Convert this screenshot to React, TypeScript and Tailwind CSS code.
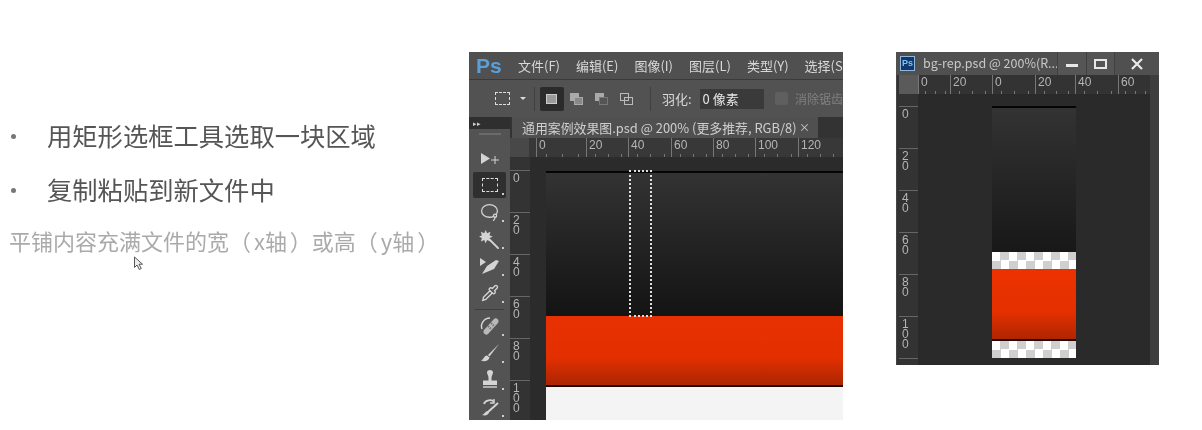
import { Lasso, Pipette } from "lucide-react";

const sans = "font-['Noto_Sans_CJK_SC',sans-serif]";
const latin = "font-['Liberation_Sans',sans-serif]";

const menus = ["文件(F)", "编辑(E)", "图像(I)", "图层(L)", "类型(Y)", "选择(S"];

const mainRuler = [
  { label: "0", width: "w-[50px]" },
  { label: "20", width: "w-[42px]" },
  { label: "40", width: "w-[43px]" },
  { label: "60", width: "w-[42px]" },
  { label: "80", width: "w-[42px]" },
  { label: "100", width: "w-[43px]" },
  { label: "120", width: "w-[42px]" },
];

const docRuler = [
  { label: "0", width: "w-[32px]" },
  { label: "20", width: "w-[42px]" },
  { label: "0", width: "w-[43px]" },
  { label: "20", width: "w-[40px]" },
  { label: "40", width: "w-[43px]" },
  { label: "60", width: "w-[32px]" },
];

function TopRuler({ cells }: { cells: { label: string; width: string }[] }) {
  return (
    <div className="flex h-full">
      {cells.map((cell, i) => (
        <div
          key={i}
          className={`flex h-full shrink-0 flex-col justify-between border-l border-[#777] pl-[2px] ${cell.width}`}
        >
          <span className={`text-[12px] leading-[14px] text-[#b5b5b5] ${latin}`}>{cell.label}</span>
          <div className="flex h-[3px] justify-around">
            <i className="w-px bg-[#777]" />
            <i className="w-px bg-[#777]" />
            <i className="w-px bg-[#777]" />
          </div>
        </div>
      ))}
    </div>
  );
}

function SideRuler({ labels }: { labels: string[] }) {
  return (
    <div className="flex flex-col overflow-hidden">
      {labels.map((label, i) => (
        <div key={i} className="h-[42px] shrink-0 border-t border-[#666] pl-[3px] pt-[2px]">
          <span className={`block w-[7px] break-all text-[12px] leading-[10px] text-[#b5b5b5] ${latin}`}>
            {label}
          </span>
        </div>
      ))}
    </div>
  );
}

function Tool({ children, active }: { children: React.ReactNode; active?: boolean }) {
  return (
    <div
      className={`relative flex h-[26px] w-[33px] shrink-0 items-center justify-center rounded-[2px] text-[#d4d4d4] ${
        active ? "bg-[#2f2f2f]" : ""
      }`}
    >
      {children}
      <span className="absolute bottom-[3px] right-[2px] h-[2px] w-[2px] bg-[#ccc]" />
    </div>
  );
}

function WandIcon() {
  return (
    <svg viewBox="0 0 22 22" className="h-[21px] w-[21px]" fill="currentColor">
      <path d="M7 1l1.500 3.500L12 3l-1 3.600 3.500 1.400-3.500 1.400 1 3.600-3.500-1.500L7 15l-1.500-3.500L2 13l1-3.600L0 8l3-1.400L2 3l3.500 1.500z" />
      <path d="M11 11l9 9" stroke="currentColor" strokeWidth="2" strokeLinecap="round" />
    </svg>
  );
}

function PenIcon() {
  return (
    <svg viewBox="0 0 22 18" className="h-[18px] w-[22px]" fill="currentColor">
      <path d="M1 1l6 4-6 4z" />
      <path d="M3 17l5-8 9-6 3 1-5 8z" />
    </svg>
  );
}

function HealIcon() {
  return (
    <svg viewBox="0 0 22 22" className="h-[22px] w-[22px]">
      <path d="M3 14C1 9 5 3 11 3" fill="none" stroke="#d4d4d4" strokeWidth="1.500" />
      <path d="M5 15L15 4c2-2 6 1 4 4L9 19c-2 2-6-1-4-4z" fill="#b8b8b8" />
      <path d="M9 11l3 3M12 8l3 3" stroke="#777" strokeWidth="2" strokeDasharray="1.500 1" />
    </svg>
  );
}

function BrushIcon() {
  return (
    <svg viewBox="0 0 22 20" className="h-[20px] w-[22px]" fill="currentColor">
      <path d="M20 1L9 12l1.500 1.500z" />
      <path d="M8 12.500c-3 0-3 4-6 5 3 1.500 8 .5 8.500-3z" />
    </svg>
  );
}

function StampIcon() {
  return (
    <svg viewBox="0 0 20 20" className="h-[20px] w-[20px]" fill="currentColor">
      <path d="M7 2.500a3 2.500 0 0 1 6 0c0 2-1.500 3-1.500 5.500v2.500H17V15H3v-4.500h5.500V8C8.500 5.500 7 4.500 7 2.500z" />
      <rect x="3" y="16" width="14" height="2" opacity="0.7" />
    </svg>
  );
}

function HistoryIcon() {
  return (
    <svg viewBox="0 0 22 20" fill="none" stroke="currentColor" className="h-[20px] w-[22px]">
      <path d="M5 7c1-4 8-5 10-2" strokeWidth="1.800" />
      <path d="M15 2v4h-4" strokeWidth="1.400" />
      <path d="M19 6L9 15" strokeWidth="2" />
      <path d="M9 14c-3 0-3 3-6 4 3 1 7 0 7-3z" fill="currentColor" stroke="none" />
    </svg>
  );
}

function ModeButton({ variant, active }: { variant: number; active?: boolean }) {
  return (
    <div
      className={`flex h-[24px] w-[24px] items-center justify-center rounded-[2px] ${
        active ? "bg-[#2b2b2b]" : ""
      }`}
    >
      {variant === 0 && <div className="h-[10px] w-[11px] border border-[#ccc] bg-[#9a9a9a]" />}
      {variant === 1 && (
        <div className="relative h-[12px] w-[13px]">
          <div className="absolute left-0 top-0 h-[8px] w-[9px] bg-[#aaa]" />
          <div className="absolute bottom-0 right-0 h-[8px] w-[9px] border border-[#aaa] bg-[#888]" />
        </div>
      )}
      {variant === 2 && (
        <div className="relative h-[12px] w-[13px]">
          <div className="absolute left-0 top-0 h-[8px] w-[9px] bg-[#aaa]" />
          <div className="absolute bottom-0 right-0 h-[8px] w-[9px] border border-[#777] bg-[#555]" />
        </div>
      )}
      {variant === 3 && (
        <div className="relative h-[12px] w-[13px]">
          <div className="absolute left-0 top-0 h-[8px] w-[9px] border border-[#bbb]" />
          <div className="absolute bottom-0 right-0 h-[8px] w-[9px] border border-[#bbb]" />
        </div>
      )}
    </div>
  );
}

function MainWindow() {
  return (
    <div className={`flex h-[368px] w-[374px] shrink-0 flex-col overflow-hidden bg-[#4c4c4c] blur-[0.5px] ${sans}`}>
      <div className="flex h-[28px] shrink-0 items-center border-b border-[#3a3a3a] bg-[#505050] pl-[7px]">
        <span className={`w-[42px] shrink-0 text-[21px] font-bold leading-none text-[#5a9fd8] ${latin}`}>Ps</span>
        <div className="flex shrink-0 gap-[16px] whitespace-nowrap text-[13px] text-[#d8d8d8]">
          {menus.map((menu) => (
            <span key={menu}>{menu}</span>
          ))}
        </div>
      </div>

      <div className="flex h-[37px] shrink-0 items-center bg-[#525252] pl-[26px]">
        <div className="h-[13px] w-[15px] border border-dashed border-[#ddd]" />
        <span className="ml-[10px] h-0 w-0 border-x-[3px] border-t-[3px] border-x-transparent border-t-[#ddd]" />
        <div className="ml-[8px] h-[24px] w-px bg-[#3f3f3f]" />
        <div className="ml-[5px] flex gap-[1px]">
          <ModeButton variant={0} active />
          <ModeButton variant={1} />
          <ModeButton variant={2} />
          <ModeButton variant={3} />
        </div>
        <div className="ml-[11px] h-[24px] w-px bg-[#3f3f3f]" />
        <span className="ml-[11px] whitespace-nowrap text-[13px] text-[#d8d8d8]">羽化:</span>
        <div className="ml-[8px] flex h-[20px] w-[65px] items-center bg-[#3a3a3a] px-[3px] text-[13px] text-[#e6e6e6]">
          0 像素
        </div>
        <div className="ml-[11px] h-[13px] w-[13px] rounded-[2px] bg-[#5f5f5f]" />
        <span className="ml-[7px] whitespace-nowrap text-[12px] text-[#808080]">消除锯齿</span>
      </div>

      <div className="flex min-h-0 flex-1">
        <div className="flex w-[41px] shrink-0 flex-col items-center bg-[#535353]">
          <div className="flex h-[15px] w-full items-center bg-[#2f2f2f] pl-[4px] text-[7px] leading-none text-[#ccc]">
            ▸▸
          </div>
          <div className="mt-[4px] h-[2px] w-[22px] border-y border-[#6a6a6a]" />
          <div className="mt-[14px] flex h-[20px] w-[33px] shrink-0 items-center justify-center text-[#d4d4d4]">
            <svg viewBox="0 0 20 14" className="h-[14px] w-[20px]" fill="currentColor">
              <path d="M1 1l9 5.500-9 5.500z" />
              <path d="M15 4v8M11 8h8" stroke="currentColor" strokeWidth="1" />
            </svg>
          </div>
          <div className="mt-[3px] flex flex-col items-center gap-[1px]">
            <Tool active>
              <div className="h-[14px] w-[16px] border border-dashed border-[#ddd]" />
            </Tool>
            <Tool>
              <Lasso size={19} strokeWidth={1.6} className="-scale-x-100" />
            </Tool>
            <Tool>
              <WandIcon />
            </Tool>
            <Tool>
              <PenIcon />
            </Tool>
            <Tool>
              <Pipette size={18} strokeWidth={1.8} />
            </Tool>
            <div className="my-[2px] h-px w-[29px] bg-[#3d3d3d]" />
            <Tool>
              <HealIcon />
            </Tool>
            <Tool>
              <BrushIcon />
            </Tool>
            <Tool>
              <StampIcon />
            </Tool>
            <Tool>
              <HistoryIcon />
            </Tool>
          </div>
        </div>

        <div className="flex min-w-0 flex-1 flex-col bg-[#2b2b2b]">
          <div className="flex h-[21px] shrink-0 bg-[#333]">
            <div className="ml-[2px] flex w-[306px] items-center justify-between whitespace-nowrap bg-[#505050] pl-[10px] pr-[8px] text-[12.9px] text-[#cfcfcf]">
              <span>通用案例效果图.psd @ 200% (更多推荐, RGB/8)</span>
              <span className="text-[11px] leading-none">×</span>
            </div>
          </div>
          <div className="flex h-[19px] shrink-0 bg-[#383838]">
            <div className="w-[19px] shrink-0 bg-[#484848]" />
            <div className="ml-[7px]">
              <TopRuler cells={mainRuler} />
            </div>
          </div>
          <div className="flex min-h-0 flex-1">
            <div className="w-[20px] shrink-0 bg-[#333] pt-[13px]">
              <SideRuler labels={["0", "20", "40", "60", "80", "100"]} />
            </div>
            <div className="flex min-w-0 flex-1 flex-col pl-[16px]">
              <div className="h-[14px] shrink-0" />
              <div className="relative flex min-h-0 flex-1 flex-col">
                <div className="h-[2px] shrink-0 bg-[#050505]" />
                <div className="h-[143px] shrink-0 bg-linear-to-b from-[#333] to-[#141414]" />
                <div className="h-[69px] shrink-0 bg-linear-to-b from-[#e83103] via-[#e33000] via-60% to-[#ac2502]" />
                <div className="h-[2px] shrink-0 bg-[#1c0800]" />
                <div className="min-h-0 flex-1 bg-[#f4f4f4]" />
                <div className="absolute left-[83px] top-[-1px] h-[147px] w-[23px] border-2 border-dotted border-[#dedede]" />
              </div>
            </div>
          </div>
        </div>
      </div>
    </div>
  );
}

function Checker() {
  return (
    <div className="h-[17px] shrink-0 bg-[repeating-conic-gradient(#cfcfcf_0_25%,#ffffff_0_50%)] bg-[length:17px_17px]" />
  );
}

function DocWindow() {
  return (
    <div className={`flex h-[313px] w-[263px] shrink-0 flex-col overflow-hidden bg-[#444] blur-[0.5px] ${sans}`}>
      <div className="flex h-[23px] shrink-0 items-center bg-[#505050] pl-[4px]">
        <div className={`flex h-[15px] w-[15px] items-center justify-center border border-[#8fb7dc] bg-[#10386a] text-[9px] font-bold leading-none text-[#7fc0f0] ${latin}`}>
          Ps
        </div>
        <span className="ml-[8px] w-[134px] shrink-0 whitespace-nowrap text-[12.5px] text-[#c8c8c8]">
          bg-rep.psd @ 200%(R...
        </span>
        <div className="flex h-full flex-1 text-white">
          <div className="flex w-[30px] items-end justify-center border-x border-[#414141] bg-[#555] pb-[8px]">
            <div className="h-[3px] w-[12px] bg-[#e8e8e8]" />
          </div>
          <div className="flex w-[28px] items-center justify-center border-r border-[#414141] bg-[#555]">
            <div className="h-[10px] w-[13px] border-2 border-[#e8e8e8]" />
          </div>
          <div className="flex flex-1 items-center justify-center bg-[#505050]">
            <svg viewBox="0 0 12 12" className="h-[12px] w-[12px]" stroke="#e8e8e8" strokeWidth="2.200">
              <path d="M1 1l10 10M11 1L1 11" />
            </svg>
          </div>
        </div>
      </div>
      <div className="flex min-h-0 flex-1 pl-[1px]">
        <div className="flex min-w-0 flex-1 flex-col bg-[#2a2a2a]">
          <div className="flex h-[19px] shrink-0 bg-[#333]">
            <div className="ml-[2px] w-[19px] shrink-0 bg-[#5a5a5a]" />
            <TopRuler cells={docRuler} />
          </div>
          <div className="flex min-h-0 flex-1">
            <div className="w-[21px] shrink-0 overflow-hidden bg-[#333] pl-[2px] pt-[12px]">
              <SideRuler labels={["0", "20", "40", "60", "80", "100", ""]} />
            </div>
            <div className="flex min-w-0 flex-1 flex-col pl-[74px] pt-[12px]">
              <div className="flex w-[84px] flex-col">
                <div className="h-[2px] shrink-0 bg-[#050505]" />
                <div className="h-[144px] shrink-0 bg-linear-to-b from-[#333] to-[#181818]" />
                <Checker />
                <div className="h-[70px] shrink-0 bg-linear-to-b from-[#ec3200] via-[#e63000] via-60% to-[#ae2602]" />
                <div className="h-[2px] shrink-0 bg-[#2a0800]" />
                <Checker />
              </div>
            </div>
          </div>
        </div>
        <div className="w-[9px] shrink-0 bg-[#3e3e3e]" />
      </div>
    </div>
  );
}

export default function App() {
  return (
    <div className={`flex h-[430px] w-[1202px] overflow-hidden bg-white pt-[52px] ${sans}`}>
      <div className="w-[469px] shrink-0 pl-[9px] pt-[66px] blur-[0.3px]">
        <div className="flex h-[36px] items-center text-[25.3px] leading-none text-[#555]">
          <span className="ml-[2px] h-[5px] w-[5px] rounded-full bg-[#777]" />
          <span className="ml-[31px] whitespace-nowrap">用矩形选框工具选取一块区域</span>
        </div>
        <div className="mt-[18px] flex h-[36px] items-center text-[25.3px] leading-none text-[#555]">
          <span className="ml-[2px] h-[5px] w-[5px] rounded-full bg-[#777]" />
          <span className="ml-[31px] whitespace-nowrap">复制粘贴到新文件中</span>
        </div>
        <p className="mt-[16px] whitespace-pre text-[22px] leading-[32px] text-[#aaa] [word-spacing:-2px]">
          平铺内容充满文件的宽（ x轴 ）或高（ y轴 ）
        </p>
        <svg viewBox="0 0 12 16" className="ml-[124px] h-[16px] w-[12px]" fill="#eee" stroke="#555" strokeWidth="1">
          <path d="M1.500 1v10.500l2.500-2.500 2.300 4.500 2-1-2.300-4.300h3.500z" />
        </svg>
      </div>
      <MainWindow />
      <div className="w-[53px] shrink-0" />
      <DocWindow />
    </div>
  );
}
